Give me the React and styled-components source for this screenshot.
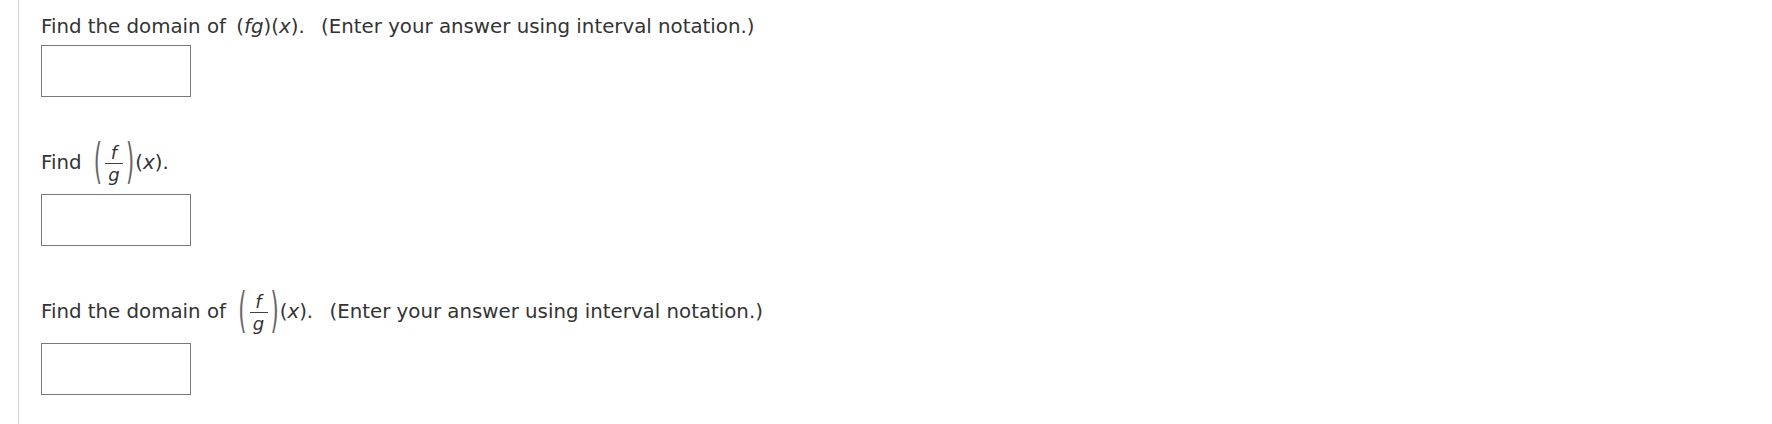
import React from "react";
import styled, { createGlobalStyle } from "styled-components";

const GlobalStyle = createGlobalStyle`
  html, body {
    margin: 0;
    padding: 0;
    background: #fff;
  }
  body {
    font-family: "DejaVu Sans", Verdana, sans-serif;
    color: #333;
  }
`;

const Page = styled.div`
  margin-left: 18px;
  border-left: 1px solid #d3d3d3;
  min-height: 424px;
  padding: 15px 0 0 22px;
  box-sizing: border-box;
`;

const Question = styled.div`
  margin-bottom: 45px;
`;

const Prompt = styled.div`
  font-size: 19.8px;
  line-height: 23px;
  white-space: nowrap;
`;

const Math = styled.span`
  margin: 0 ${({ $after }) => ($after ? $after : 4)}px 0
    ${({ $before }) => ($before ? $before : 4)}px;
`;

const Var = styled.i`
  font-style: italic;
`;

/* f over g between stretched parens, centred on the math axis */
const Frac = styled.span`
  display: inline-flex;
  align-items: center;
  height: 43px;
  vertical-align: middle;
`;

const Paren = styled.span`
  display: inline-block;
  font-size: 21px;
  line-height: 21px;
  color: #666;
  margin: 0 1px;
  transform: scaleY(2.25);
`;

const Stack = styled.span`
  display: inline-flex;
  flex-direction: column;
  align-items: center;
  padding: 0 2px;
`;

const Part = styled.i`
  display: block;
  font-size: 18px;
  line-height: 21px;
  font-style: italic;
`;

const Bar = styled.span`
  display: block;
  width: 18px;
  height: 1px;
  background: #444;
`;

const AnswerBox = styled.input`
  display: block;
  box-sizing: border-box;
  width: 150px;
  height: 52px;
  margin: ${({ $top }) => $top}px 0 0;
  border: 1px solid #7a7a7a;
  background: #fff;
  padding: 0 6px;
  font: inherit;
  font-size: 16px;
  outline: none;
`;

const FOverG = () => (
  <Frac>
    <Paren>(</Paren>
    <Stack>
      <Part>f</Part>
      <Bar />
      <Part>g</Part>
    </Stack>
    <Paren>)</Paren>
  </Frac>
);

export default function App() {
  return (
    <>
      <GlobalStyle />
      <Page>
        <Question>
          <Prompt>
            Find the domain of{" "}
            <Math $after={10}>
              (<Var>fg</Var>)(<Var>x</Var>).
            </Math>{" "}
            (Enter your answer using interval notation.)
          </Prompt>
          <AnswerBox $top={7} type="text" />
        </Question>
        <Question>
          <Prompt>
            Find{" "}
            <Math $before={5}>
              <FOverG />(<Var>x</Var>).
            </Math>
          </Prompt>
          <AnswerBox $top={9} type="text" />
        </Question>
        <Question>
          <Prompt>
            Find the domain of{" "}
            <Math $before={5} $after={10}>
              <FOverG />(<Var>x</Var>).
            </Math>{" "}
            (Enter your answer using interval notation.)
          </Prompt>
          <AnswerBox $top={9} type="text" />
        </Question>
      </Page>
    </>
  );
}
